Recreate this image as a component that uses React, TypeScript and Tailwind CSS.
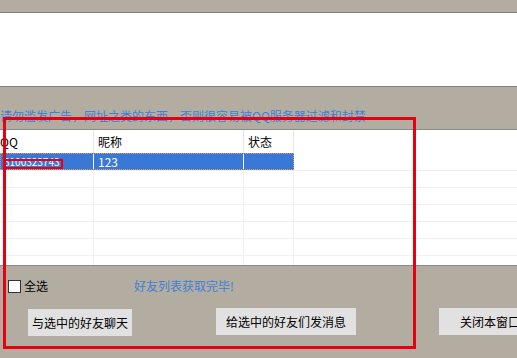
import React from 'react';

const rows = Array.from({ length: 6 });

export default function App() {
  return (
    <div
      className="relative w-[517px] h-[358px] overflow-hidden bg-[#b3ada1] text-[12px] leading-none text-black"
      style={{ fontFamily: '"Noto Sans CJK SC", "Noto Sans", sans-serif' }}
    >
      {/* top strip */}
      <div className="h-[12px]" />
      <div className="h-[75px] bg-white border-y border-[#7f7f7f]" />

      {/* warning */}
      <div className="h-[42px] flex items-end pb-[7px]">
        <span className="text-[#3f7fd8] whitespace-nowrap">
          请勿滥发广告，网址之类的东西，否则很容易被QQ服务器过滤和封禁
        </span>
      </div>

      {/* list view */}
      <div className="h-[137px] bg-white border-y border-[#8a8a8a] flex flex-col overflow-hidden">
        <div className="h-[23px] flex shrink-0">
          <div className="w-[94px] border-r border-[#e5e5e5] flex items-center">QQ</div>
          <div className="w-[150px] border-r border-[#e5e5e5] flex items-center pl-[4px]">昵称</div>
          <div className="w-[50px] border-r border-[#e5e5e5] flex items-center pl-[4px]">状态</div>
          <div className="flex-1" />
        </div>
        <div className="h-[18px] flex shrink-0 border-b border-[#f0f0f0]">
          <div className="w-[294px] flex bg-[#3a78d8] text-white border border-dotted border-[#d8a060]">
            <div className="w-[93px] border-r border-white flex items-center pl-[3px] text-[10px]">3100323743</div>
            <div className="w-[150px] border-r border-white flex items-center pl-[4px]">123</div>
            <div className="flex-1" />
          </div>
          <div className="flex-1" />
        </div>
        {rows.map((_, i) => (
          <div key={i} className="h-[17px] flex shrink-0 border-b border-[#f0f0f0]">
            <div className="w-[94px] border-r border-[#f0f0f0]" />
            <div className="w-[150px] border-r border-[#f0f0f0]" />
            <div className="w-[50px] border-r border-[#f0f0f0]" />
            <div className="flex-1" />
          </div>
        ))}
      </div>

      {/* bottom controls */}
      <div className="flex items-center h-[26px] mt-[7px]">
        <div className="ml-[8px] w-[13px] h-[13px] bg-white border border-[#333]" />
        <span className="ml-[3px]">全选</span>
        <span className="ml-[86px] text-[#3f7fd8]">好友列表获取完毕!</span>
      </div>
      <div className="flex items-start mt-[9px] whitespace-nowrap">
        <button className="ml-[28px] mt-[1px] w-[104px] h-[27px] bg-[#e1e1e1] flex items-center justify-center shrink-0">
          与选中的好友聊天
        </button>
        <button className="ml-[84px] w-[140px] h-[27px] bg-[#e1e1e1] flex items-center justify-center shrink-0">
          给选中的好友们发消息
        </button>
        <button className="ml-[83px] w-[100px] h-[27px] bg-[#e1e1e1] flex items-center justify-start pl-[21px] shrink-0">
          关闭本窗口
        </button>
      </div>

      {/* annotation overlays */}
      <div className="absolute left-[3px] top-[117px] w-[413px] h-[232px] border-[3px] border-[#e60012] pointer-events-none" />
      <div className="absolute left-[4px] top-[159px] w-[59px] h-[10px] border-[2px] border-[#e60012] pointer-events-none" />
    </div>
  );
}
